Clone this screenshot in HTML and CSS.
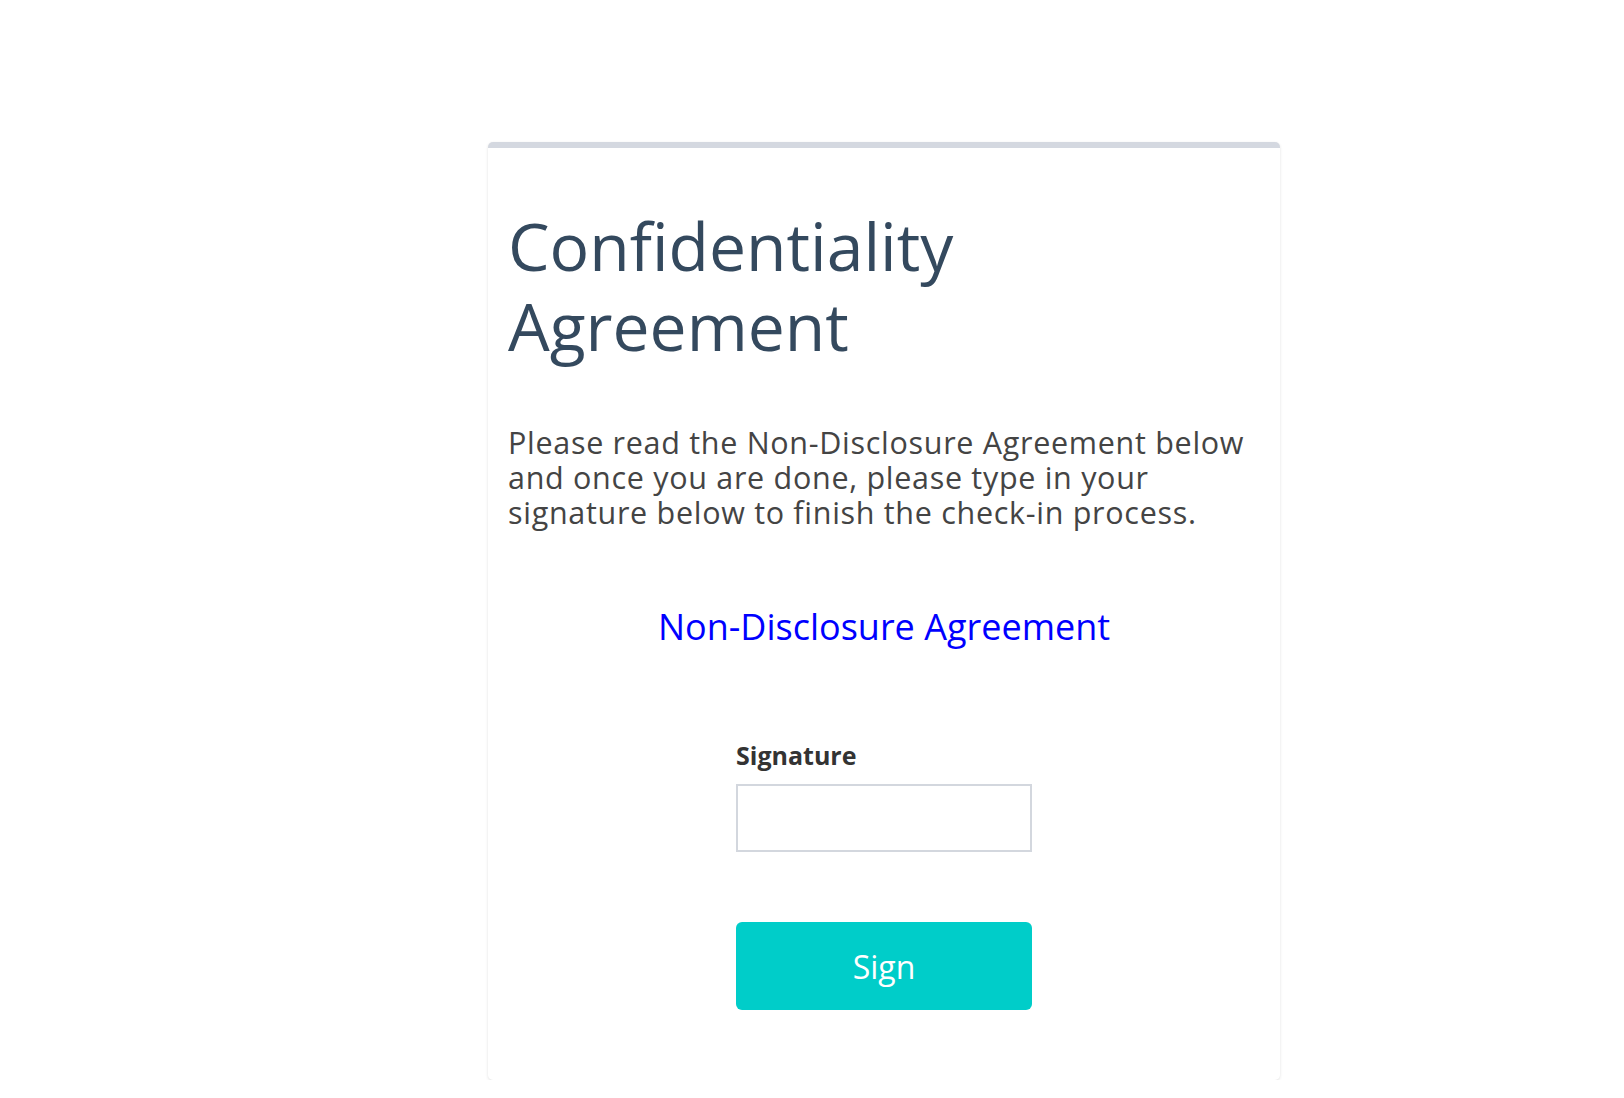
FILE: index.html
```html
<!DOCTYPE html>
<html lang="en">
<head>
<meta charset="utf-8">
<title>Confidentiality Agreement</title>
<link rel="stylesheet" href="styles.css">
</head>
<body>
<main class="page">
  <section class="card">
    <h1 class="title">Confidentiality Agreement</h1>
    <p class="intro">Please read the Non-Disclosure Agreement below and once you are done, please type in your signature below to finish the check-in process.</p>
    <a class="nda-link" href="#">Non-Disclosure Agreement</a>
    <form class="sign-form">
      <label class="sig-label" for="sig">Signature</label>
      <input class="sig-input" id="sig" type="text">
      <button class="sign-btn" type="button">Sign</button>
    </form>
  </section>
</main>
</body>
</html>
```

FILE: styles.css
```css
html, body {
  margin: 0;
  padding: 0;
  background: #ffffff;
}

body {
  font-family: "Open Sans", "Noto Sans", sans-serif;
}

.page {
  display: flex;
  justify-content: center;
  padding-top: 142px;
  padding-left: 144px;
}

.card {
  width: 792px;
  height: 938px;
  box-sizing: border-box;
  background: #fff;
  border-top: 6px solid #d4d8e0;
  border-radius: 5px;
  box-shadow: 0 1px 3px rgba(0, 0, 0, 0.12);
  padding: 57px 20px 0 20px;
  display: flex;
  flex-direction: column;
}

.title {
  margin: 0;
  font-size: 66px;
  line-height: 80px;
  font-weight: 400;
  color: #34495e;
}

.intro {
  margin: 60px 0 0 0;
  font-size: 30.5px;
  line-height: 35px;
  letter-spacing: 0.7px;
  color: #444444;
}

.nda-link {
  align-self: center;
  margin-top: 75px;
  font-size: 36px;
  line-height: 44px;
  color: #0000ff;
  text-decoration: none;
}

.sign-form {
  align-self: center;
  width: 296px;
  margin-top: 91px;
  display: flex;
  flex-direction: column;
}

.sig-label {
  font-size: 25px;
  line-height: 30px;
  font-weight: 700;
  color: #333333;
}

.sig-input {
  margin-top: 14px;
  height: 68px;
  box-sizing: border-box;
  border: 2px solid #d3d7de;
  border-radius: 0;
  padding: 0 10px;
  font-size: 24px;
  font-family: inherit;
  outline: none;
}

.sign-btn {
  margin-top: 70px;
  height: 88px;
  border: none;
  border-radius: 6px;
  background: #00cdc9;
  color: #ffffff;
  font-family: inherit;
  font-size: 32px;
  cursor: pointer;
}
```
